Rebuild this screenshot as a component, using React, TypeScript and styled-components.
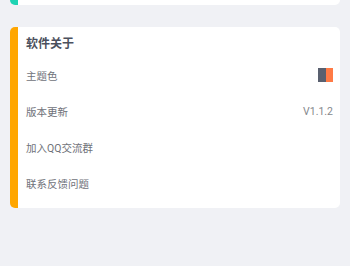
import React from "react";
import styled, { createGlobalStyle } from "styled-components";

const FONT_FAMILY = 'Roboto, "Noto Sans CJK SC", "Noto Sans", sans-serif';

const GlobalStyle = createGlobalStyle`
  html, body {
    margin: 0;
    padding: 0;
    background: #f0f1f5;
  }
  body {
    font-family: ${FONT_FAMILY};
  }
`;

const Page = styled.div`
  display: flex;
  flex-direction: column;
  gap: 22px;
  padding: 0 10px;
  min-height: 266px;
  box-sizing: border-box;
`;

// the card above is mostly scrolled out of view, only its bottom edge shows
const ClippedCard = styled.div<{ $accent: string }>`
  height: 5px;
  background: #fff;
  border-left: 8px solid ${(p) => p.$accent};
  border-radius: 0 0 5px 5px;
`;

const Card = styled.section<{ $accent: string }>`
  display: flex;
  flex-direction: column;
  background: #fff;
  border-left: 8px solid ${(p) => p.$accent};
  border-radius: 5px;
  padding: 0 7px 7px 8px;
`;

const Title = styled.h3`
  margin: 0;
  height: 30px;
  display: flex;
  align-items: center;
  font-size: 12px;
  font-weight: 700;
  color: #4b505d;
`;

const Row = styled.div`
  height: 36px;
  display: flex;
  align-items: center;
  justify-content: space-between;
  font-size: 10.5px;
  color: #6f7279;
`;

const Value = styled.span`
  color: #85878c;
  font-size: 10.5px;
`;

const Swatch = styled.div`
  display: flex;
  width: 15px;
  height: 14px;
  margin-top: -1px;
`;

const SwatchPart = styled.span<{ $color: string }>`
  flex: 1;
  background: ${(p) => p.$color};
`;

const App: React.FC = () => {
  return (
    <>
      <GlobalStyle />
      <Page>
        <ClippedCard $accent="#1ed3b3" />
        <Card $accent="#ffa600">
          <Title>软件关于</Title>
          <Row>
            <span>主题色</span>
            <Swatch>
              <SwatchPart $color="#59606f" />
              <SwatchPart $color="#ff7a45" />
            </Swatch>
          </Row>
          <Row>
            <span>版本更新</span>
            <Value>V1.1.2</Value>
          </Row>
          <Row>
            <span>加入QQ交流群</span>
          </Row>
          <Row>
            <span>联系反馈问题</span>
          </Row>
        </Card>
      </Page>
    </>
  );
};

export default App;
